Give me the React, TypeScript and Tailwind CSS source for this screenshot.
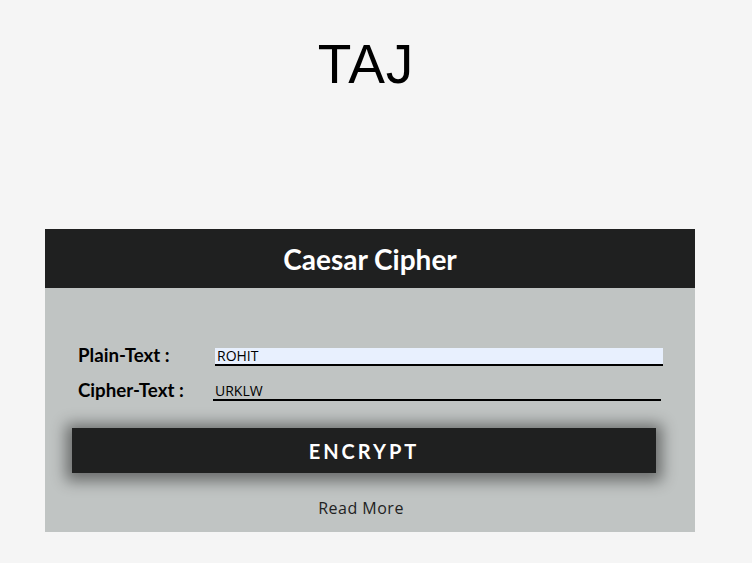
import React from 'react';

const App: React.FC = () => {
  return (
    <div className="w-[752px] h-[563px] bg-[#f5f5f5] overflow-hidden">
      <h1 className="pt-[34px] h-[229px] pr-[20px] text-center text-[55px] leading-[60px] font-normal tracking-[1px] text-black font-['Liberation_Sans',sans-serif]">
        TAJ
      </h1>
      <div className="ml-[45px] w-[650px] bg-[#c0c4c3]">
        <div className="h-[59px] bg-[#1f2020] flex items-center justify-center">
          <h2 className="text-white text-[28px] font-bold font-['Lato',sans-serif]">Caesar Cipher</h2>
        </div>
        <div className="pt-[56px] pb-[12px] font-['Lato',sans-serif]">
          <div className="flex items-end h-[22px] pl-[33px]">
            <label className="w-[137px] text-[18.7px] font-bold text-black leading-[22px]">Plain-Text :</label>
            <div className="w-[448px] h-[18px] bg-[#e8f0fe] border-b-2 border-black flex items-center pl-[2px] pb-[1px] text-[14px] font-medium text-black font-['Open_Sans',sans-serif]">
              ROHIT
            </div>
          </div>
          <div className="flex items-end h-[22px] mt-[13px] pl-[33px]">
            <label className="w-[135px] text-[18.7px] font-bold text-black leading-[22px]">Cipher-Text :</label>
            <div className="w-[448px] h-[18px] border-b-2 border-black flex items-center pl-[2px] pb-[2px] text-[14px] font-medium text-black font-['Open_Sans',sans-serif]">
              URKLW
            </div>
          </div>
          <button className="mt-[27px] ml-[27px] w-[584px] h-[45px] bg-[#1f2020] text-white text-[20px] font-bold tracking-[3px] shadow-[0_2px_14px_6px_rgba(0,0,0,0.45)] font-['Lato',sans-serif]">
            ENCRYPT
          </button>
          <p className="mt-[23px] pr-[18px] text-center text-[16px] tracking-[0.5px] text-[#222] font-['Open_Sans',sans-serif]">Read More</p>
        </div>
      </div>
    </div>
  );
};

export default App;
